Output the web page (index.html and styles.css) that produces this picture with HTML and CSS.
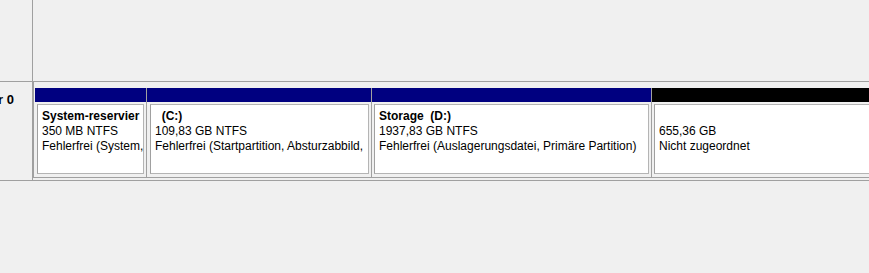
FILE: index.html
```html
<!DOCTYPE html>
<html lang="de">
<head>
  <meta charset="UTF-8" />
  <title>Datenträgerverwaltung</title>
  <link rel="stylesheet" href="styles.css">
</head>
<body>

  <div class="disk disk-prev">
    <div class="disk-label"></div>
    <div class="disk-rest"></div>
  </div>

  <div class="disk">
    <div class="disk-label"><span>Datenträger 0</span></div>
    <div class="parts">
      <div class="part part-sys">
        <div class="bar"></div>
        <div class="body">
          <div class="box">
            <div class="name">System-reservier</div>
            <div>350 MB NTFS</div>
            <div>Fehlerfrei (System,</div>
          </div>
        </div>
      </div>
      <div class="part part-c">
        <div class="bar"></div>
        <div class="body">
          <div class="box">
            <div class="name">  (C:)</div>
            <div>109,83 GB NTFS</div>
            <div>Fehlerfrei (Startpartition, Absturzabbild,</div>
          </div>
        </div>
      </div>
      <div class="part part-d">
        <div class="bar"></div>
        <div class="body">
          <div class="box">
            <div class="name">Storage  (D:)</div>
            <div>1937,83 GB NTFS</div>
            <div>Fehlerfrei (Auslagerungsdatei, Primäre Partition)</div>
          </div>
        </div>
      </div>
      <div class="part part-free">
        <div class="bar"></div>
        <div class="body">
          <div class="box">
            <div class="name"> </div>
            <div>655,36 GB</div>
            <div>Nicht zugeordnet</div>
          </div>
        </div>
      </div>
    </div>
  </div>

</body>
</html>
```

FILE: styles.css
```css
* {
  box-sizing: border-box;
  margin: 0;
  padding: 0;
}

body {
  font-family: "Liberation Sans", Arial, sans-serif;
  font-size: 12px;
  color: #000;
  background: #f0f0f0;
  width: 869px;
  height: 273px;
  overflow: hidden;
}

/* one row per disk */
.disk {
  display: flex;
  height: 99px;
  border-bottom: 1px solid #a0a0a0;
}

.disk-prev {
  height: 82px;
}

.disk-label {
  width: 33px;
  flex: none;
  border-right: 1px solid #a0a0a0;
  display: flex;
  justify-content: flex-end;
  overflow: hidden;
  white-space: nowrap;
  padding: 10px 18px 0 0;
  font-weight: bold;
  font-size: 13px;
}

.disk-label span {
  flex: none;
}

.disk-rest {
  flex: 1;
}

/* partition strip */
.parts {
  flex: 1;
  display: flex;
  height: 96px;
  border-left: 1px solid #a0a0a0;
  border-bottom: 1px solid #a0a0a0;
  padding: 6px 0 0 1px;
  overflow: hidden;
}

.part {
  flex: none;
  display: flex;
  flex-direction: column;
  border-right: 1px solid #a0a0a0;
}

.part-sys { width: 112px; }
.part-c { width: 225px; }
.part-d { width: 280px; }
.part-free { width: 240px; border-right: none; }

.bar {
  height: 14px;
  background: #000080;
}

.part-free .bar {
  background: #000;
}

.body {
  flex: 1;
  padding: 2px 2px 3px 2px;
}

.part-c .body {
  padding-left: 3px;
}

.box {
  height: 70px;
  background: #fff;
  border: 1px solid #b4b4b4;
  border-left-color: #a0a0a0;
  padding: 4px 3px 0 4px;
  line-height: 15px;
  white-space: nowrap;
  overflow: hidden;
}

.name {
  font-weight: bold;
  white-space: pre;
}
```
